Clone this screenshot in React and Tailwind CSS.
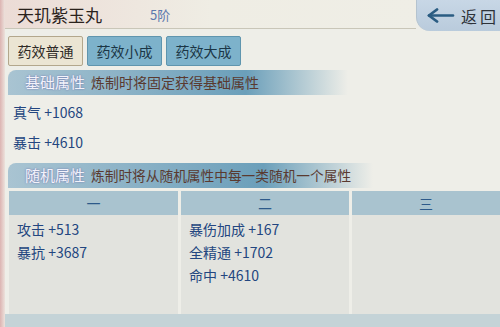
export default function App() {
  const font = { fontFamily: '"Noto Sans CJK SC", "Noto Sans", sans-serif' };

  return (
    <div
      className="w-[500px] h-[327px] overflow-hidden flex bg-[#eeeee8] text-[#234680]"
      style={font}
    >
      {/* pink left edge */}
      <div className="w-[5px] shrink-0 bg-gradient-to-r from-[#dcb4b2] to-[#ece2dc]" />

      <div className="flex-1 flex flex-col">
        {/* Header */}
        <div className="h-[29px] flex items-stretch">
          <div className="flex-1 flex items-center border-b border-[#c9c6b8] bg-gradient-to-r from-[#ecdcd6] via-[#efede4] to-[#efeee6]">
            <span className="ml-[12px] text-[17px] leading-none text-[#2a221c]">天玑紫玉丸</span>
            <span className="ml-[48px] text-[13px] leading-none text-[#5b78ad]">5阶</span>
          </div>
          <div className="w-[84px] h-[31px] flex items-center gap-[6px] pl-[10px] rounded-bl-[14px] border-l border-[#b4c3cf] bg-gradient-to-b from-[#c8d7e6] to-[#b9cbdc]">
            <svg width="28" height="15" viewBox="0 0 28 15">
              <path d="M2 7.5 L26 7.5" stroke="#2a5c82" strokeWidth="2.6" strokeLinecap="round" />
              <path d="M10 1.5 L2 7.5 L10 13.5" stroke="#2a5c82" strokeWidth="2.8" fill="none" strokeLinecap="round" strokeLinejoin="round" />
            </svg>
            <span className="text-[16px] leading-none text-[#2d3238] tracking-[3px]">返回</span>
          </div>
        </div>

        {/* Tabs */}
        <div className="flex gap-[4px] mt-[7px] ml-[3px]">
          <div className="w-[75px] h-[30px] flex items-center justify-center rounded-[2px] border border-[#b3a78c] bg-[#ebe5d3] text-[14px] text-[#2e2a26]">
            药效普通
          </div>
          <div className="w-[75px] h-[30px] flex items-center justify-center rounded-[2px] border border-[#5f95ae] bg-[#7db2cb] text-[14px] text-[#1b3646]">
            药效小成
          </div>
          <div className="w-[75px] h-[30px] flex items-center justify-center rounded-[2px] border border-[#5f95ae] bg-[#7db2cb] text-[14px] text-[#1b3646]">
            药效大成
          </div>
        </div>

        {/* Base attributes */}
        <div className="mt-[4px] ml-[3px] h-[25px] flex items-center whitespace-nowrap rounded-tl-[8px] bg-gradient-to-r from-[#a9c4d2] via-[#6b9fba] via-70% to-transparent w-[340px]">
          <span className="ml-[17px] text-[15px] text-[#f2f2fa] [text-shadow:0_0_2px_#6a68a8]">基础属性</span>
          <span className="ml-[6px] text-[14px] text-[#5a3a30]">炼制时将固定获得基础属性</span>
        </div>
        <div className="ml-[8px] mt-[7px] flex flex-col gap-[9px] text-[14px]">
          <div className="h-[21px] leading-[21px]">真气 +1068</div>
          <div className="h-[21px] leading-[21px]">暴击 +4610</div>
        </div>

        {/* Random attributes */}
        <div className="mt-[10px] ml-[3px] h-[25px] flex items-center whitespace-nowrap rounded-tl-[8px] bg-gradient-to-r from-[#a9c4d2] via-[#6b9fba] via-70% to-transparent w-[365px]">
          <span className="ml-[17px] text-[15px] text-[#f2f2fa] [text-shadow:0_0_2px_#6a68a8]">随机属性</span>
          <span className="ml-[6px] text-[13.7px] text-[#5a3a30]">炼制时将从随机属性中每一类随机一个属性</span>
        </div>

        <div className="mt-[3px] ml-[4px] flex gap-[3px] h-[123px]">
          <Column title="一" width="w-[169px]" items={["攻击 +513", "暴抗 +3687"]} />
          <Column title="二" width="w-[168px]" items={["暴伤加成 +167", "全精通 +1702", "命中 +4610"]} />
          <Column title="三" width="flex-1" items={[]} />
        </div>

        <div className="flex-1 bg-[#c4d3d7]" />
      </div>
    </div>
  );
}

function Column({ title, width, items }) {
  return (
    <div className={`${width} flex flex-col bg-[#e2e3de]`}>
      <div className="h-[24px] flex items-center justify-center bg-[#a9c3cf] text-[14px] text-[#2d5a8a]">
        {title}
      </div>
      <div className="pl-[8px] pt-[3px] flex flex-col text-[14px]">
        {items.map((t) => (
          <div key={t} className="h-[23px] leading-[23px]">
            {t}
          </div>
        ))}
      </div>
    </div>
  );
}
